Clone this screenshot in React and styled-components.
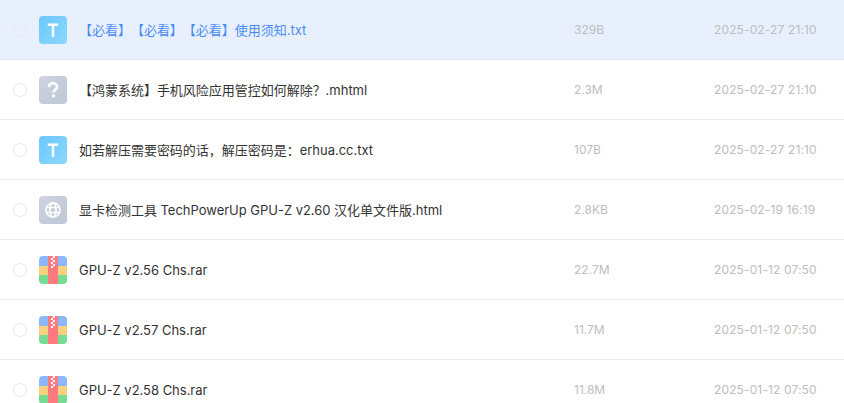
import React from "react";
import styled, { createGlobalStyle } from "styled-components";

const GlobalStyle = createGlobalStyle`
  html, body {
    margin: 0;
    padding: 0;
    background: #fff;
    overflow: hidden;
  }
  body {
    font-family: Inter, "Noto Sans CJK SC", sans-serif;
    text-spacing-trim: space-all;
  }
`;

const List = styled.div`
  width: 844px;
  height: 403px;
  overflow: hidden;
`;

const Row = styled.div`
  display: flex;
  align-items: center;
  box-sizing: border-box;
  height: 60px;
  padding-left: 13px;
  background: ${props => (props.$active ? "#e9f0fd" : "#fff")};
  border-bottom: 1px solid ${props => (props.$active ? "#e4e9f2" : "#ececec")};
`;

const Check = styled.span`
  flex: none;
  box-sizing: border-box;
  width: 14px;
  height: 14px;
  border: 1px solid ${props => (props.$active ? "#e6e9ee" : "#e6e6e6")};
  border-radius: 50%;
  margin-right: 12px;
`;

const IconBox = styled.span`
  flex: none;
  display: flex;
  width: 28px;
  height: 28px;
  margin-right: 12px;
`;

const Name = styled.span`
  flex: none;
  width: 495px;
  font-size: 13px;
  line-height: 20px;
  white-space: nowrap;
  letter-spacing: -0.02px;
  color: ${props => (props.$active ? "#4a8cf7" : "#333")};
`;

const Size = styled.span`
  flex: none;
  width: 140px;
  font-size: 12px;
  color: #bdbdbd;
`;

const Time = styled.span`
  flex: none;
  font-size: 12px;
  letter-spacing: 0.13px;
  white-space: nowrap;
  color: #bdbdbd;
`;

const TextIcon = () => (
  <svg width="28" height="28" viewBox="0 0 28 28">
    <defs>
      <linearGradient id="txt" x1="0" y1="0" x2="1" y2="1">
        <stop offset="0" stopColor="#6cc8fb" />
        <stop offset="1" stopColor="#8ad8ff" />
      </linearGradient>
    </defs>
    <rect width="28" height="28" rx="4" fill="url(#txt)" />
    <path d="M8.8 7.6h10.4v2.3h-4V21h-2.4V9.9h-4z" fill="#fff" />
  </svg>
);

const UnknownIcon = () => (
  <svg width="28" height="28" viewBox="0 0 28 28">
    <defs>
      <linearGradient id="unk" x1="0" y1="0" x2="1" y2="1">
        <stop offset="0" stopColor="#cdd3df" />
        <stop offset="1" stopColor="#bec7d5" />
      </linearGradient>
    </defs>
    <rect width="28" height="28" rx="4" fill="url(#unk)" />
    <path
      d="M10 11c0-2.4 1.8-3.8 4-3.8s4 1.5 4 3.6c0 2.9-3.6 3-3.6 5.8"
      fill="none"
      stroke="#fff"
      strokeWidth="2.6"
    />
    <rect x="13" y="18.4" width="2.9" height="2.9" fill="#fff" />
  </svg>
);

const WebIcon = () => (
  <svg width="28" height="28" viewBox="0 0 28 28">
    <defs>
      <linearGradient id="web" x1="0" y1="0" x2="1" y2="1">
        <stop offset="0" stopColor="#cdd3df" />
        <stop offset="1" stopColor="#bec7d5" />
      </linearGradient>
    </defs>
    <rect width="28" height="28" rx="4" fill="url(#web)" />
    <g fill="none" stroke="#fff" strokeWidth="1.7">
      <circle cx="14" cy="14" r="7.1" />
      <ellipse cx="14" cy="14" rx="3" ry="7.1" />
      <path d="M7.2 11.5h13.6M7.2 16.5h13.6" />
    </g>
  </svg>
);

const ZipIcon = () => (
  <svg width="28" height="28" viewBox="0 0 28 28">
    <defs>
      <clipPath id="zipClip">
        <rect width="28" height="28" rx="4" />
      </clipPath>
    </defs>
    <g clipPath="url(#zipClip)">
      <rect width="28" height="10" fill="#8cb8fb" />
      <rect y="10" width="28" height="9" fill="#fdd07f" />
      <rect y="19" width="28" height="9" fill="#74dc93" />
      <rect x="9" width="10" height="28" fill="#fd7b7f" />
      <path
        d="M14 0h2v2h-2zM12 2h2v2h-2zM14 4h2v2h-2zM12 6h2v2h-2zM14 8h2v2h-2zM12 10h2v2h-2z"
        fill="#fff"
      />
    </g>
  </svg>
);

const icons = { txt: TextIcon, unknown: UnknownIcon, web: WebIcon, zip: ZipIcon };

const files = [
  { icon: "txt", name: "【必看】【必看】【必看】使用须知.txt", size: "329B", time: "2025-02-27 21:10", active: true },
  { icon: "unknown", name: "【鸿蒙系统】手机风险应用管控如何解除？.mhtml", size: "2.3M", time: "2025-02-27 21:10" },
  { icon: "txt", name: "如若解压需要密码的话，解压密码是：erhua.cc.txt", size: "107B", time: "2025-02-27 21:10" },
  { icon: "web", name: "显卡检测工具 TechPowerUp GPU-Z v2.60 汉化单文件版.html", size: "2.8KB", time: "2025-02-19 16:19" },
  { icon: "zip", name: "GPU-Z v2.56 Chs.rar", size: "22.7M", time: "2025-01-12 07:50" },
  { icon: "zip", name: "GPU-Z v2.57 Chs.rar", size: "11.7M", time: "2025-01-12 07:50" },
  { icon: "zip", name: "GPU-Z v2.58 Chs.rar", size: "11.8M", time: "2025-01-12 07:50" }
];

const App = () => (
  <>
    <GlobalStyle />
    <List>
      {files.map(file => {
        const Icon = icons[file.icon];
        return (
          <Row key={file.name} $active={file.active}>
            <Check $active={file.active} />
            <IconBox>
              <Icon />
            </IconBox>
            <Name $active={file.active}>{file.name}</Name>
            <Size>{file.size}</Size>
            <Time>{file.time}</Time>
          </Row>
        );
      })}
    </List>
  </>
);

export default App;
